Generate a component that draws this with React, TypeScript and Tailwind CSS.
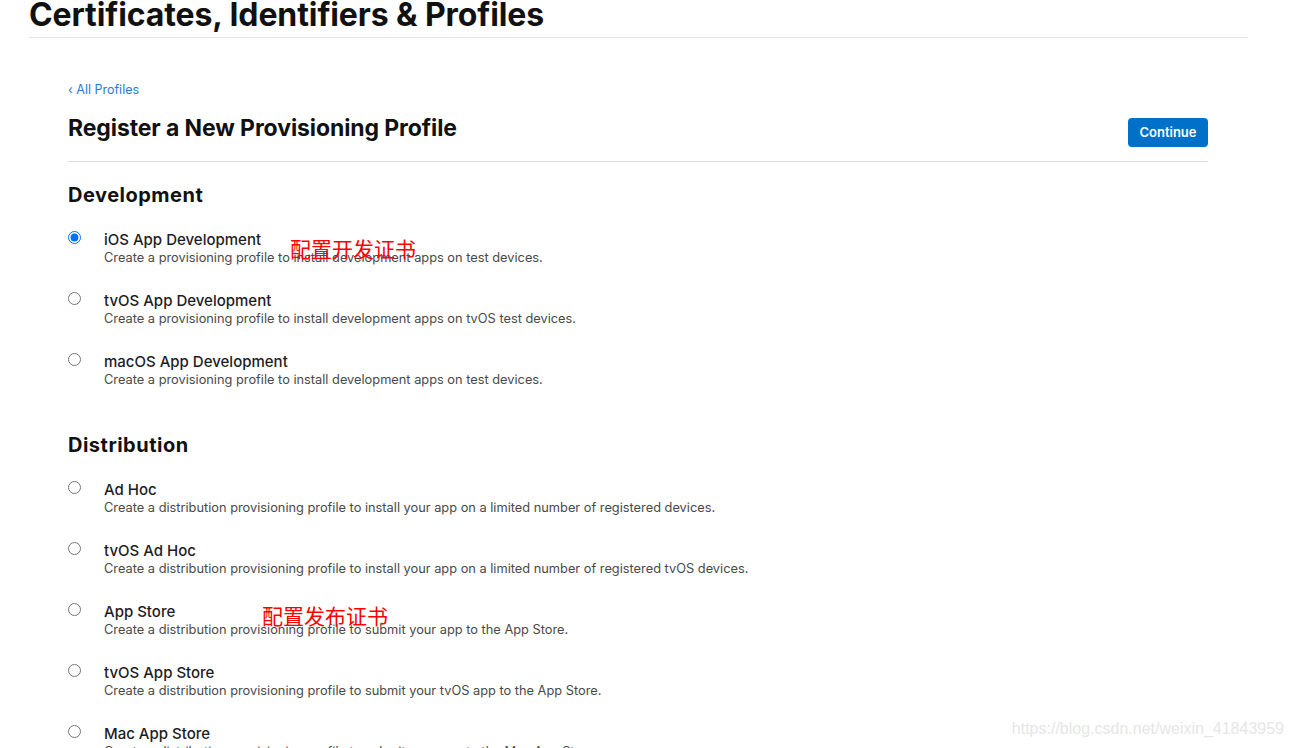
import { useState } from "react";

type Option = { id: string; title: string; desc: string; note?: string; noteOffset?: string };

const development: Option[] = [
  {
    id: "ios-dev",
    title: "iOS App Development",
    desc: "Create a provisioning profile to install development apps on test devices.",
    note: "配置开发证书",
    noteOffset: "left-[222px] top-[-5px]",
  },
  {
    id: "tvos-dev",
    title: "tvOS App Development",
    desc: "Create a provisioning profile to install development apps on tvOS test devices.",
  },
  {
    id: "macos-dev",
    title: "macOS App Development",
    desc: "Create a provisioning profile to install development apps on test devices.",
  },
];

const distribution: Option[] = [
  {
    id: "adhoc",
    title: "Ad Hoc",
    desc: "Create a distribution provisioning profile to install your app on a limited number of registered devices.",
  },
  {
    id: "tvos-adhoc",
    title: "tvOS Ad Hoc",
    desc: "Create a distribution provisioning profile to install your app on a limited number of registered tvOS devices.",
  },
  {
    id: "appstore",
    title: "App Store",
    desc: "Create a distribution provisioning profile to submit your app to the App Store.",
    note: "配置发布证书",
    noteOffset: "left-[194px] top-[-10px]",
  },
  {
    id: "tvos-appstore",
    title: "tvOS App Store",
    desc: "Create a distribution provisioning profile to submit your tvOS app to the App Store.",
  },
  {
    id: "mac-appstore",
    title: "Mac App Store",
    desc: "Create a distribution provisioning profile to submit your app to the Mac App Store.",
  },
];

function OptionRow({
  option,
  selected,
  onSelect,
}: {
  option: Option;
  selected: boolean;
  onSelect: (id: string) => void;
}) {
  return (
    <label className="relative flex h-[61px] cursor-pointer items-start">
      <span className="flex w-[36px] shrink-0">
        <input
          type="radio"
          name="profile-type"
          checked={selected}
          onChange={() => onSelect(option.id)}
          className="mt-[-9px] h-[13px] w-[13px] accent-[#0075ff]"
        />
      </span>
      <span className="flex flex-col">
        <span className="mt-[-9px] text-[15px] leading-[18px] font-medium text-[#1d1d1f]">{option.title}</span>
        <span className="text-[12.8px] leading-[18px] text-[#494949]">{option.desc}</span>
      </span>
      {/* hand-written annotation over the screenshot */}
      {option.note && (
        <span
          className={`absolute ${option.noteOffset} text-[21px] leading-[26px] text-[#ff0000] [font-family:'Noto_Sans_CJK_SC',sans-serif]`}
        >
          {option.note}
        </span>
      )}
    </label>
  );
}

export default function App() {
  const [selected, setSelected] = useState("ios-dev");

  return (
    <div className="relative h-[748px] overflow-hidden bg-white [font-family:Inter,'Liberation_Sans',sans-serif]">
      <div className="ml-[29px] w-[1219px] border-b border-[#e5e5e5] pb-[1px]">
        <h1 className="mt-[-6px] text-[32px] leading-[42px] font-bold tracking-[-0.1px] text-[#111]">
          Certificates, Identifiers &amp; Profiles
        </h1>
      </div>

      <div className="ml-[68px] w-[1140px]">
        <a href="#" className="mt-[44px] block text-[12.5px] leading-[16px] text-[#2a7ad8]">
          ‹ All Profiles
        </a>
        <div className="mt-[20px] flex items-start justify-between border-b border-[#dcdcdc] pb-[14px]">
          <h2 className="mt-[-6px] text-[23px] leading-[32px] font-bold tracking-[-0.1px] text-[#111]">
            Register a New Provisioning Profile
          </h2>
          <button className="h-[29px] w-[80px] rounded-[4px] bg-[#0070c9] text-[13px] font-semibold text-white">
            Continue
          </button>
        </div>

        <h3 className="mt-[19px] text-[20px] leading-[28px] font-bold tracking-[0.5px] text-[#111]">
          Development
        </h3>
        <div className="mt-[31px]">
          {development.map((o) => (
            <OptionRow key={o.id} option={o} selected={selected === o.id} onSelect={setSelected} />
          ))}
        </div>

        <h3 className="mt-[8px] text-[20px] leading-[28px] font-bold tracking-[0.5px] text-[#111]">
          Distribution
        </h3>
        <div className="mt-[31px]">
          {distribution.map((o) => (
            <OptionRow key={o.id} option={o} selected={selected === o.id} onSelect={setSelected} />
          ))}
        </div>
      </div>

      {/* watermark */}
      <div className="absolute right-[9px] top-[719px] text-[16px] leading-[20px] text-[#e6e6e6] [font-family:'Liberation_Sans',sans-serif]">
        https://blog.csdn.net/weixin_41843959
      </div>
    </div>
  );
}
